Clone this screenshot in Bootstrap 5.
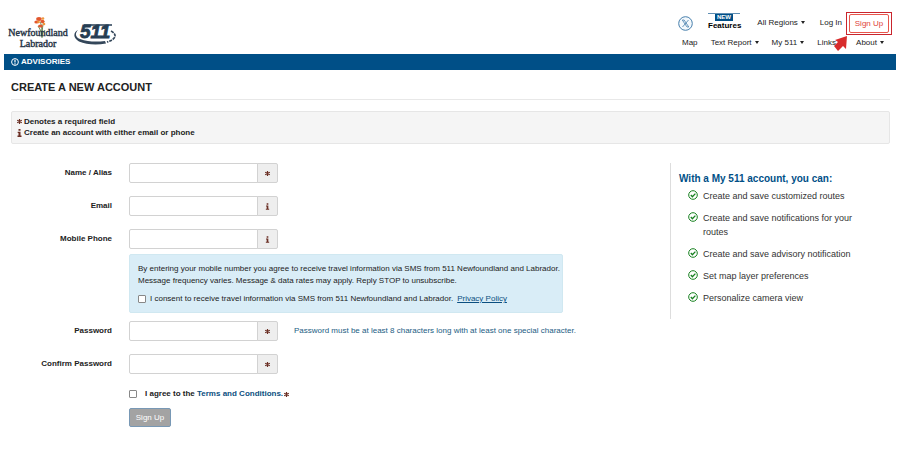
<!DOCTYPE html>
<html lang="en">
<head>
<meta charset="utf-8">
<meta name="viewport" content="width=device-width, initial-scale=1">
<title>511 Newfoundland and Labrador - Create a New Account</title>
<link href="https://cdn.jsdelivr.net/npm/bootstrap@5.3.0/dist/css/bootstrap.min.css" rel="stylesheet">
<style>
body{font-family:"Liberation Sans",Arial,sans-serif;font-size:8px;line-height:12px;color:#222;background:#fff}
a{color:#0b4f80}
.site-head{padding:9px 8px 0 7px;height:54px}
.nav-rows{width:214px}
.nav-line{height:20px}
.nav-line a,.nav-line button{color:#222;text-decoration:none;font-size:8px;line-height:12px;padding:0;border:0;background:none;white-space:nowrap}
.dropdown-toggle::after{margin-left:3px;vertical-align:1px;border-top-width:3px;border-left-width:2px;border-right-width:2px}
.nav-line .feature{color:#000;font-weight:bold;line-height:9px;margin:0 16px 4px 15px}
.new-line{border-top:1px solid #5f8eb3;height:8px;width:32px}
.new-tag{background:#004f87;color:#fff;font-size:6px;line-height:7px;font-weight:bold;width:18px;height:7px}
.signup-frame{border:1px solid #c9252d;padding:1px 2px}
.nav-line .signup{border:1px solid #e8564c;border-radius:2px;color:#e0433a;height:19px;width:40px;line-height:17px;text-align:center}
.pointer{left:-14px;top:22px}
.advisory{margin:0 4px;height:16px;background:#004f87;color:#fff;font-weight:bold;padding:0 7px}
.advisory svg{margin-right:2px}
.advisory span{line-height:16px}
main{padding:0 10px 40px 11px}
h1{font-size:11px;line-height:14px;font-weight:bold;padding:10px 0 5px;margin:0 0 11px;border-bottom:1px solid #e8e8e8;height:30px;color:#222}
.legend-box{background:#f5f5f5;border:1px solid #e6e6e6;border-radius:2px;padding:4px;line-height:11px;font-weight:bold;margin-bottom:19px;height:33px}
.legend-box svg{margin-right:1px}
.form-side{width:651px;flex:none}
.field-row{margin-bottom:13px}
.field-label{width:101px;margin-right:17px;text-align:right;font-weight:bold}
.offset-block{margin-left:118px}
.field-group{width:149px;height:20px}
.field-group .form-control{font-size:8px;line-height:12px;padding:3px 5px;border-color:#d2d2d2;border-radius:2px;min-height:0;height:20px}
.field-group .input-group-text{width:21px;padding:0;background:#eee;border-color:#d2d2d2;border-radius:2px;justify-content:center}
.consent{background:#d9edf7;border:1px solid #d0e8f1;border-radius:2px;width:434px;padding:8px;margin-top:-8px;margin-bottom:8px;height:59px}
.consent p{margin:0 0 6px;white-space:nowrap}
.tick{width:8px;height:8px;margin:0;appearance:none;background:#fff;border:1px solid #888;border-radius:1px;flex:none}
.tick:checked{background:#004f87}
.hint{color:#1b5d83;margin-left:16px}
.terms-row{padding:1px 0 8px}
.submit-btn{font-size:8px;line-height:11px;padding:3px 0;border-radius:2px;background:#a3a3a3;border:1px solid #7898b5;color:#fff;height:19px;width:42px;white-space:nowrap}
.benefits{border-left:1px solid #ddd;padding:9px 22px 14px 8px;height:156px;flex:1 1 0}
.benefits h2{font-size:10px;line-height:14px;font-weight:bold;color:#004f87;margin:0 0 3px}
.benefits ul{margin:0;padding-left:9px;list-style:none;font-size:9px;line-height:14px;color:#333}
.benefits li{display:flex;gap:5px;margin-bottom:8px}
.benefits li svg{flex:none;margin-top:1px}
</style>
</head>
<body>
<svg class="d-none" aria-hidden="true">
  <symbol id="star" viewBox="0 0 7 7"><path d="M3.500 1v5M1.200 2.200l4.600 2.600M5.800 2.200L1.200 4.800" stroke="#6b2f24" stroke-width="1.200" fill="none"/></symbol>
  <symbol id="info" viewBox="0 0 6 8"><path d="M2 0h2v1.800H2zM1.200 2.800H4v3.800h1V8H1V6.600h1V4h-.8z" fill="#6b2f24"/></symbol>
  <symbol id="check" viewBox="0 0 10 10"><circle cx="5" cy="5" r="4.300" fill="none" stroke="#16801f"/><path d="M2.800 5l1.600 1.700 3-3.100" fill="none" stroke="#16801f" stroke-width="1.300"/></symbol>
</svg>
<header class="site-head d-flex justify-content-between">
  <a href="#" aria-label="511 Newfoundland Labrador home">
    <svg class="d-block" width="114" height="42" viewBox="0 0 114 42">
      <g fill="none" stroke="#567a43" stroke-width=".9"><path d="M33 13c2 3 2 8 2 16M37 12c-1 3-2 8-2 16M31 17c2 3 3 5 4 9M34 25c2-1 3-2 4-4"/></g>
      <g fill="#e2572d"><ellipse cx="32" cy="10" rx="2.800" ry="1.900"/><ellipse cx="35.500" cy="12.500" rx="2" ry="1.800"/><ellipse cx="29.500" cy="13" rx="2.200" ry="1.500"/><ellipse cx="33.500" cy="17" rx="2.400" ry="1.600"/></g>
      <g fill="#f0983c"><circle cx="31.500" cy="13" r="1.300"/><circle cx="36" cy="9.500" r="1.300"/><circle cx="37" cy="15" r="1.300"/></g>
      <g font-family="Liberation Serif,serif" font-size="10" fill="#263345" stroke="#263345" stroke-width=".4" text-anchor="middle"><text x="31" y="27">Newfoundland</text><text x="31" y="38">Labrador</text></g>
      <path d="M71 21c-3 3-3 7 2 9 8 3 17 3 25 2l1 2.500c-10 2-20 1-27-2-6-3.500-6-9-1-11.500z" fill="#34475a"/>
      <path d="M104 22c6 3 6 8-4 11" fill="none" stroke="#34475a" stroke-width="1.700" stroke-dasharray="3 1"/>
      <path d="M77 16h28" fill="none" stroke="#263d53" stroke-width="1.500"/>
      <text x="73" y="29" font-family="Liberation Sans,Arial,sans-serif" font-size="19" font-weight="bold" font-style="italic" fill="#263d53" stroke="#263d53" stroke-width=".8">511</text>
    </svg>
  </a>
  <nav class="nav-rows" aria-label="Main">
    <div class="nav-line d-flex align-items-center mt-1">
      <a href="#" aria-label="X"><svg class="d-block" width="15" height="15" viewBox="0 0 15 15"><circle cx="7.500" cy="7.500" r="6.800" fill="#f3f8fc" stroke="#477fac"/><path d="M4.300 4h1.800l4.700 7H9zM10.500 4L4.500 11" fill="none" stroke="#477fac" stroke-width=".8"/></svg></a>
      <a href="#" class="feature d-block"><span class="new-line d-flex justify-content-center"><span class="new-tag text-center">NEW</span></span>Features</a>
      <button class="dropdown-toggle" type="button">All Regions</button>
      <a href="#" class="ms-auto me-1">Log In</a>
      <div class="signup-frame position-relative">
        <a href="#" class="signup d-block">Sign Up</a>
        <svg class="pointer position-absolute" width="16" height="17" viewBox="0 0 16 17" aria-hidden="true"><path d="M14 1L2 5l3 2-4 4 4 5 5-5 3 3z" fill="#d82c2c"/></svg>
      </div>
    </div>
    <div class="nav-line d-flex align-items-center justify-content-between ps-1 pe-2">
      <a href="#">Map</a>
      <button class="dropdown-toggle" type="button">Text Report</button>
      <button class="dropdown-toggle" type="button">My 511</button>
      <button class="dropdown-toggle" type="button">Links</button>
      <button class="dropdown-toggle" type="button">About</button>
    </div>
  </nav>
</header>
<div class="advisory d-flex align-items-center">
  <svg width="8" height="8" viewBox="0 0 8 8" aria-hidden="true"><circle cx="4" cy="4" r="3.400" fill="none" stroke="#fff"/><path d="M4 1.700v2.800M4 5.200v1.200" stroke="#fff" stroke-width="1.200"/></svg>
  <span>ADVISORIES</span>
</div>
<main>
  <h1>CREATE A NEW ACCOUNT</h1>
  <div class="legend-box">
    <div><svg width="7" height="7"><use href="#star"/></svg>Denotes a required field</div>
    <div><svg width="7" height="8"><use href="#info"/></svg>Create an account with either email or phone</div>
  </div>
  <div class="d-flex">
    <form class="form-side me-2">
      <div class="field-row d-flex align-items-center">
        <label class="field-label" for="alias">Name / Alias</label>
        <div class="input-group field-group flex-nowrap"><input class="form-control" id="alias" type="text"><span class="input-group-text"><svg width="7" height="7"><use href="#star"/></svg></span></div>
      </div>
      <div class="field-row d-flex align-items-center">
        <label class="field-label" for="email">Email</label>
        <div class="input-group field-group flex-nowrap"><input class="form-control" id="email" type="email"><span class="input-group-text"><svg width="5" height="7"><use href="#info"/></svg></span></div>
      </div>
      <div class="field-row d-flex align-items-center">
        <label class="field-label" for="phone">Mobile Phone</label>
        <div class="input-group field-group flex-nowrap"><input class="form-control" id="phone" type="tel"><span class="input-group-text"><svg width="5" height="7"><use href="#info"/></svg></span></div>
      </div>
      <div class="consent offset-block">
        <p>By entering your mobile number you agree to receive travel information via SMS from 511 Newfoundland and Labrador.<br>Message frequency varies. Message &amp; data rates may apply. Reply STOP to unsubscribe.</p>
        <div class="d-flex align-items-center"><input class="tick me-1" type="checkbox" id="sms"><label for="sms">I consent to receive travel information via SMS from 511 Newfoundland and Labrador.</label><a class="ms-1" href="#">Privacy Policy</a></div>
      </div>
      <div class="field-row d-flex align-items-center">
        <label class="field-label" for="pass">Password</label>
        <div class="input-group field-group flex-nowrap"><input class="form-control" id="pass" type="password"><span class="input-group-text"><svg width="7" height="7"><use href="#star"/></svg></span></div>
        <span class="hint">Password must be at least 8 characters long with at least one special character.</span>
      </div>
      <div class="field-row d-flex align-items-center">
        <label class="field-label" for="confirm">Confirm Password</label>
        <div class="input-group field-group flex-nowrap"><input class="form-control" id="confirm" type="password"><span class="input-group-text"><svg width="7" height="7"><use href="#star"/></svg></span></div>
      </div>
      <div class="terms-row offset-block d-flex align-items-center fw-bold"><input class="tick me-2" type="checkbox" id="terms"><label for="terms">I agree to the <a class="text-decoration-none" href="#">Terms and Conditions.</a></label><svg width="7" height="7"><use href="#star"/></svg></div>
      <div class="offset-block"><button class="btn submit-btn" type="submit">Sign Up</button></div>
    </form>
    <aside class="benefits">
      <h2>With a My 511 account, you can:</h2>
      <ul>
        <li><svg width="10" height="10"><use href="#check"/></svg>Create and save customized routes</li>
        <li><svg width="10" height="10"><use href="#check"/></svg>Create and save notifications for your routes</li>
        <li><svg width="10" height="10"><use href="#check"/></svg>Create and save advisory notification</li>
        <li><svg width="10" height="10"><use href="#check"/></svg>Set map layer preferences</li>
        <li><svg width="10" height="10"><use href="#check"/></svg>Personalize camera view</li>
      </ul>
    </aside>
  </div>
</main>
<script src="https://cdn.jsdelivr.net/npm/bootstrap@5.3.0/dist/js/bootstrap.bundle.min.js"></script>
</body>
</html>
